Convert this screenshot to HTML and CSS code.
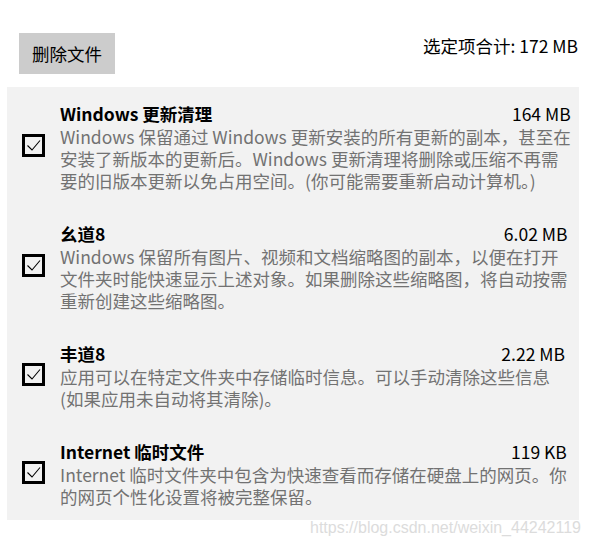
FILE: index.html
```
<!DOCTYPE html>
<html lang="zh-CN">
<head>
<meta charset="utf-8">
<title>磁盘清理</title>
<link rel="stylesheet" href="styles.css">
</head>
<body>
<div class="page">
  <header class="top">
    <button class="btn">删除文件</button>
    <div class="total">选定项合计: 172 MB</div>
  </header>
  <section class="panel">
    <div class="item">
      <span class="check"><svg viewBox="0 0 17 17" width="17" height="17"><polyline points="2.5,8.5 7,13 15,3.5" fill="none" stroke="#000" stroke-width="1.1"/></svg></span>
      <div class="info">
        <div class="head"><span class="title">Windows 更新清理</span><span class="size">164 MB</span></div>
        <p class="desc">Windows 保留通过 Windows 更新安装的所有更新的副本，甚至在<br>安装了新版本的更新后。Windows 更新清理将删除或压缩不再需<br>要的旧版本更新以免占用空间。(你可能需要重新启动计算机。)</p>
      </div>
    </div>
    <div class="item">
      <span class="check"><svg viewBox="0 0 17 17" width="17" height="17"><polyline points="2.5,8.5 7,13 15,3.5" fill="none" stroke="#000" stroke-width="1.1"/></svg></span>
      <div class="info">
        <div class="head"><span class="title">幺道8</span><span class="size">6.02 MB</span></div>
        <p class="desc">Windows 保留所有图片、视频和文档缩略图的副本，以便在打开<br>文件夹时能快速显示上述对象。如果删除这些缩略图，将自动按需<br>重新创建这些缩略图。</p>
      </div>
    </div>
    <div class="item">
      <span class="check"><svg viewBox="0 0 17 17" width="17" height="17"><polyline points="2.5,8.5 7,13 15,3.5" fill="none" stroke="#000" stroke-width="1.1"/></svg></span>
      <div class="info">
        <div class="head"><span class="title">丰道8</span><span class="size">2.22 MB</span></div>
        <p class="desc">应用可以在特定文件夹中存储临时信息。可以手动清除这些信息<br>(如果应用未自动将其清除)。</p>
      </div>
    </div>
    <div class="item">
      <span class="check"><svg viewBox="0 0 17 17" width="17" height="17"><polyline points="2.5,8.5 7,13 15,3.5" fill="none" stroke="#000" stroke-width="1.1"/></svg></span>
      <div class="info">
        <div class="head"><span class="title">Internet 临时文件</span><span class="size">119 KB</span></div>
        <p class="desc">Internet 临时文件夹中包含为快速查看而存储在硬盘上的网页。你<br>的网页个性化设置将被完整保留。</p>
      </div>
    </div>
  </section>
  <div class="watermark">https://blog.csdn.net/weixin_44242119</div>
</div>
</body>
</html>
```
FILE: styles.css
```
html, body {
  margin: 0;
  padding: 0;
  background: #fff;
}
body {
  font-family: "Noto Sans CJK SC", "Noto Sans", sans-serif;
  font-size: 17.5px;
  color: #000;
}
.page {
  position: relative;
  width: 589px;
  height: 548px;
  overflow: hidden;
}
.top {
  display: flex;
  justify-content: space-between;
  align-items: flex-start;
  padding: 33px 11px 0 19px;
}
.btn {
  width: 96px;
  height: 41px;
  border: none;
  background: #cccccc;
  font-family: inherit;
  font-size: 17.5px;
  color: #000;
  padding: 0;
  line-height: 41px;
}
.total {
  margin-top: 1px;
  line-height: 24px;
}
.panel {
  margin: 13px 0 0 7px;
  width: 572px;
  box-sizing: border-box;
  background: #f2f2f2;
  padding: 15px 14px 12px 15px;
  display: flex;
  flex-direction: column;
  gap: 30px;
}
.item {
  display: grid;
  grid-template-columns: 23px 1fr;
  column-gap: 15px;
  align-items: center;
}
.check {
  width: 23px;
  height: 23px;
  box-sizing: border-box;
  border: 3px solid #000;
  display: flex;
  align-items: center;
  justify-content: center;
  margin-bottom: 4px;
}
.check svg {
  display: block;
}
.head {
  display: flex;
  justify-content: space-between;
  line-height: 24px;
}
.title {
  font-weight: 700;
}
.desc {
  margin: 0;
  color: #727272;
  line-height: 22px;
  white-space: nowrap;
}
.watermark {
  position: absolute;
  right: 8px;
  top: 518px;
  font-family: "Liberation Sans", Arial, sans-serif;
  font-size: 16px;
  color: #dcdcdc;
  line-height: 20px;
}
```
